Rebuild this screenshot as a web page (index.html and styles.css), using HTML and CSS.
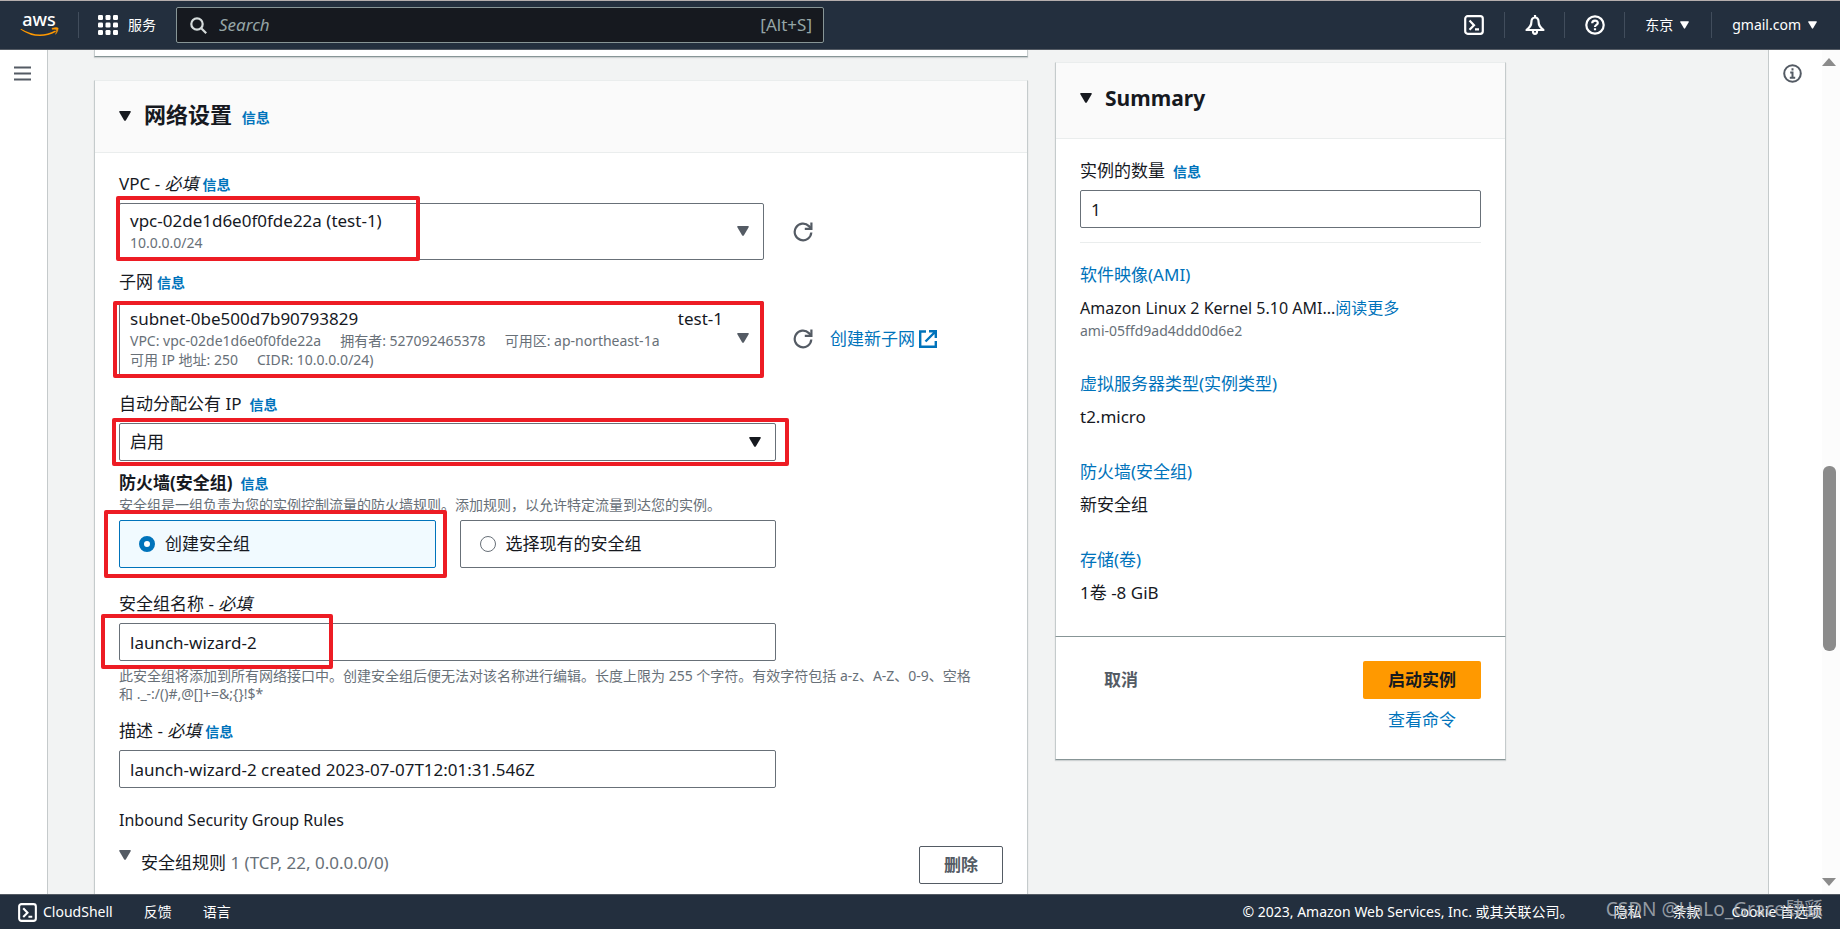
FILE: index.html
```html
<!DOCTYPE html>
<html lang="zh-CN">
<head>
<meta charset="utf-8">
<title>启动实例 | EC2</title>
<link rel="stylesheet" href="styles.css">
</head>
<body>
<svg class="defs" width="0" height="0" aria-hidden="true">
  <symbol id="caret" viewBox="0 0 12 10"><path d="M1 0h10q1 0 .8.9L6.8 9.400q-.8.9-1.600 0L.2.9Q0 0 1 0z" fill="currentColor"/></symbol>
  <symbol id="refresh" viewBox="0 0 20 20"><path d="M18.300 10.500a8.300 8.300 0 1 1-2.400-6.400l2 2" fill="none" stroke="currentColor" stroke-width="2.200"/><path d="M18.400.5v6.400h-6.600" fill="none" stroke="currentColor" stroke-width="2.200"/></symbol>
  <symbol id="shell" viewBox="0 0 20 20"><rect x="1.200" y="1.200" width="17.600" height="17.600" rx="2.500" fill="none" stroke="currentColor" stroke-width="2.200"/><path d="M5.500 5.500l4.500 4.700-4.500 4.600M11 14.400h4" fill="none" stroke="currentColor" stroke-width="2.200"/></symbol>
</svg>

<header class="topbar">
  <a class="logo" href="#" aria-label="AWS">
    <svg width="39" height="32" viewBox="0 0 39 32">
      <text x="19" y="17" text-anchor="middle" class="logo-text">aws</text>
      <path d="M1 19.700q17.500 10.500 34.200 1.800l.8 1.300Q18 32.500 .5 20.400z" fill="#f90"/>
      <path d="M32 19.300q5-1.600 6.200-.2 0 3.600-2.600 6.200 1.300-3.200.9-4.800-1.500-.6-4.500-.2z" fill="#f90" stroke="#f90" stroke-width=".5"/>
    </svg>
  </a>
  <button class="services" type="button">
    <svg width="20" height="20" viewBox="0 0 20 20" fill="#fff"><rect width="5" height="5" rx="1.200"/><rect x="7.500" width="5" height="5" rx="1.200"/><rect x="15" width="5" height="5" rx="1.200"/><rect y="7.500" width="5" height="5" rx="1.200"/><rect x="7.500" y="7.500" width="5" height="5" rx="1.200"/><rect x="15" y="7.500" width="5" height="5" rx="1.200"/><rect y="15" width="5" height="5" rx="1.200"/><rect x="7.500" y="15" width="5" height="5" rx="1.200"/><rect x="15" y="15" width="5" height="5" rx="1.200"/></svg>
    <span>服务</span>
  </button>
  <label class="search">
    <svg width="17" height="17" viewBox="0 0 17 17" fill="none" stroke="#d5dbdb" stroke-width="2.200"><circle cx="7" cy="7" r="5.700"/><path d="M11 11l5.200 5.200"/></svg>
    <input type="search" placeholder="Search" aria-label="Search">
    <span>[Alt+S]</span>
  </label>
  <nav class="tools" aria-label="工具">
    <button type="button" aria-label="CloudShell"><svg width="20" height="20"><use href="#shell"/></svg></button>
    <button type="button" aria-label="通知"><svg width="20" height="20" viewBox="0 0 20 20" fill="none" stroke="#fff" stroke-width="2.200" stroke-linejoin="round"><path d="M10 2.500c-2.600 0-3.600 2-3.600 4.500 0 4-1.900 5.500-4.900 8h17c-3-2.500-4.900-4-4.900-8 0-2.500-1-4.500-3.600-4.500zM10 0v2.500M8 15.500v1.300a2 2 0 0 0 4 0v-1.300"/></svg></button>
    <button type="button" aria-label="帮助"><svg width="20" height="20" viewBox="0 0 20 20" fill="none" stroke="#fff" stroke-width="2.200"><circle cx="10" cy="10" r="8.700"/><path d="M7.200 8.300c0-3.600 5.600-3.600 5.600-.4 0 2-2.800 1.900-2.800 4M10 13.300v2"/></svg></button>
    <button class="menu" type="button">东京<svg width="9" height="8"><use href="#caret"/></svg></button>
    <button class="menu" type="button">gmail.com<svg width="9" height="8"><use href="#caret"/></svg></button>
  </nav>
</header>

<div class="workspace">
  <aside class="rail rail-left">
    <button type="button" aria-label="打开导航"><svg width="17" height="15" viewBox="0 0 17 15" stroke="#545b64" stroke-width="2"><path d="M0 1.500h17M0 7.500h17M0 13.500h17"/></svg></button>
  </aside>

  <main class="content">
    <div class="columns">
      <div class="left-column">
        <div class="card previous-card"></div>
        <section class="card">
          <header class="card-head network-head">
            <svg class="caret" width="12" height="10"><use href="#caret"/></svg>
            <h2>网络设置 <a class="info" href="#">信息</a></h2>
          </header>
          <div class="card-body form">
            <div class="field">
              <div class="label"><label for="vpc">VPC - <i>必填</i></label><a class="info" href="#">信息</a></div>
              <div class="control-row">
                <div class="marked picker-wrap">
                  <button id="vpc" class="picker" type="button" aria-haspopup="listbox">
                    <span class="picker-text">
                      <span class="main-line">vpc-02de1d6e0f0fde22a (test-1)</span>
                      <span class="sub-line">10.0.0.0/24</span>
                    </span>
                    <svg class="caret" width="12" height="10"><use href="#caret"/></svg>
                  </button>
                  <span class="mark mark-vpc"></span>
                </div>
                <button class="refresh" type="button" aria-label="刷新"><svg width="20" height="20"><use href="#refresh"/></svg></button>
              </div>
            </div>

            <div class="field subnet-field">
              <div class="label"><label for="subnet">子网</label><a class="info" href="#">信息</a></div>
              <div class="control-row">
                <div class="marked picker-wrap">
                  <button id="subnet" class="picker" type="button" aria-haspopup="listbox">
                    <span class="picker-text">
                      <span class="main-line"><span>subnet-0be500d7b90793829</span><span>test-1</span></span>
                      <span class="sub-line"><span>VPC: vpc-02de1d6e0f0fde22a</span><span>拥有者: 527092465378</span><span>可用区: ap-northeast-1a</span></span>
                      <span class="sub-line"><span>可用 IP 地址: 250</span><span>CIDR: 10.0.0.0/24)</span></span>
                    </span>
                    <svg class="caret" width="12" height="10"><use href="#caret"/></svg>
                  </button>
                  <span class="mark mark-subnet"></span>
                </div>
                <button class="refresh" type="button" aria-label="刷新"><svg width="20" height="20"><use href="#refresh"/></svg></button>
                <a class="create-link" href="#">创建新子网<svg width="18" height="18" viewBox="0 0 18 18" fill="none" stroke="currentColor" stroke-width="2.400"><path d="M7 1.500H1.200v15.300h15.600V11M10 1.200h6.800V8M16.500 1.500L6.500 11.500"/></svg></a>
              </div>
            </div>

            <div class="field">
              <div class="label wide"><label for="public-ip">自动分配公有 IP</label><a class="info" href="#">信息</a></div>
              <div class="marked narrow">
                <select id="public-ip" class="box"><option>启用</option></select>
                <svg class="caret select-caret" width="12" height="10"><use href="#caret"/></svg>
                <span class="mark mark-ip"></span>
              </div>
            </div>

            <fieldset class="field firewall-field">
              <legend class="label wide"><b>防火墙(安全组)</b><a class="info" href="#">信息</a></legend>
              <p class="hint">安全组是一组负责为您的实例控制流量的防火墙规则。添加规则，以允许特定流量到达您的实例。</p>
              <div class="tiles narrow">
                <div class="marked">
                  <label class="tile tile-on"><input type="radio" name="group" checked>创建安全组</label>
                  <span class="mark mark-tile"></span>
                </div>
                <label class="tile"><input type="radio" name="group">选择现有的安全组</label>
              </div>
            </fieldset>

            <div class="field name-field">
              <div class="label"><label for="name">安全组名称 - <i>必填</i></label></div>
              <div class="marked narrow">
                <input id="name" class="box" type="text" value="launch-wizard-2">
                <span class="mark mark-name"></span>
              </div>
              <p class="hint">此安全组将添加到所有网络接口中。创建安全组后便无法对该名称进行编辑。长度上限为 255 个字符。有效字符包括 a-z、A-Z、0-9、空格和 ._-:/()#,@[]+=&amp;;{}!$*</p>
            </div>

            <div class="field description-field">
              <div class="label"><label for="description">描述 - <i>必填</i></label><a class="info" href="#">信息</a></div>
              <div class="narrow"><input id="description" class="box" type="text" value="launch-wizard-2 created 2023-07-07T12:01:31.546Z"></div>
            </div>

            <h3 class="rules-title">Inbound Security Group Rules</h3>
            <div class="rule">
              <svg class="caret" width="12" height="10"><use href="#caret"/></svg>
              <p>安全组规则 <span>1 (TCP, 22, 0.0.0.0/0)</span></p>
              <button class="button" type="button">删除</button>
            </div>
          </div>
        </section>
      </div>

      <aside class="summary">
        <section class="card">
          <header class="card-head summary-head">
            <svg class="caret" width="12" height="10"><use href="#caret"/></svg>
            <h2>Summary</h2>
          </header>
          <div class="card-body">
            <div class="label wide"><label for="count">实例的数量</label><a class="info" href="#">信息</a></div>
            <input id="count" class="box" type="text" inputmode="numeric" value="1">
            <dl>
              <div><dt><a href="#">软件映像(AMI)</a></dt><dd class="ami">Amazon Linux 2 Kernel 5.10 AMI...<a href="#">阅读更多</a></dd><dd class="hint">ami-05ffd9ad4ddd0d6e2</dd></div>
              <div><dt><a href="#">虚拟服务器类型(实例类型)</a></dt><dd>t2.micro</dd></div>
              <div><dt><a href="#">防火墙(安全组)</a></dt><dd>新安全组</dd></div>
              <div><dt><a href="#">存储(卷)</a></dt><dd>1卷 -8 GiB</dd></div>
            </dl>
          </div>
        </section>
        <div class="card actions">
          <button class="plain" type="button">取消</button>
          <div class="launch">
            <button class="primary" type="button">启动实例</button>
            <a href="#">查看命令</a>
          </div>
        </div>
      </aside>
    </div>
  </main>

  <aside class="rail rail-right">
    <button type="button" aria-label="信息"><svg width="19" height="19" viewBox="0 0 19 19" fill="none" stroke="#545b64" stroke-width="2"><circle cx="9.500" cy="9.500" r="8.300"/><path d="M9.500 4.300v2.200M7.200 8.500h2.300v5M6.800 13.700h5.400"/></svg></button>
  </aside>
  <div class="scrollbar" aria-hidden="true">
    <svg width="14" height="8"><path d="M0 8L7 0l7 8z" fill="#8b8b8b"/></svg>
    <span class="track"><span class="thumb"></span></span>
    <svg width="14" height="8"><path d="M0 0l7 8 7-8z" fill="#8b8b8b"/></svg>
  </div>
</div>

<footer class="bottombar">
  <a class="shell" href="#"><svg width="19" height="19"><use href="#shell"/></svg>CloudShell</a>
  <a href="#">反馈</a>
  <a href="#">语言</a>
  <span class="copyright">© 2023, Amazon Web Services, Inc. 或其关联公司。</span>
  <a href="#">隐私</a>
  <a href="#">条款</a>
  <a href="#">Cookie 首选项</a>
  <span class="watermark">CSDN @HaLo_Grace肆繇</span>
</footer>
</body>
</html>
```
FILE: styles.css
```css
* { box-sizing: border-box; }
body {
  margin: 0;
  height: 100vh;
  display: flex;
  flex-direction: column;
  overflow: hidden;
  background: #f2f3f3;
  color: #16191f;
  font: 17px/22px "Noto Sans", "Noto Sans CJK SC", sans-serif;
}
h2, h3, p, dl, dd { margin: 0; }
a { color: #0073bb; text-decoration: none; }
button, input, select { font: inherit; color: inherit; }
button { border: 0; padding: 0; background: none; }
svg { flex: none; display: block; }
.defs { position: absolute; }

.topbar {
  flex: none;
  height: 50px;
  display: flex;
  align-items: center;
  background: #232f3e;
  border-top: 1px solid #b5aead;
  border-bottom: 1px solid #545b64;
  color: #fff;
  font-size: 14px;
}
.logo { padding: 0 19px 0 20px; height: 26px; display: flex; align-items: center; border-right: 1px solid #414d5c; }
.logo-text { font: 500 18px "Noto Sans", sans-serif; fill: #fff; }
.services { display: flex; align-items: center; gap: 10px; margin: 0 20px 0 19px; }
.search {
  flex: 0 1 648px;
  height: 36px;
  display: flex;
  align-items: center;
  gap: 12px;
  padding: 0 11px 0 13px;
  background: #16191f;
  border: 1px solid #879596;
  border-radius: 2px;
  color: #95a5a6;
  font-size: 17px;
}
.search input { flex: 1; min-width: 0; border: 0; padding: 0; background: none; outline: 0; }
.search input::placeholder { color: #95a5a6; font-style: italic; }
.tools { margin-left: auto; display: flex; align-items: center; }
.tools button {
  height: 26px;
  width: 60px;
  display: flex;
  align-items: center;
  justify-content: center;
  gap: 7px;
  border-left: 1px solid #414d5c;
}
.tools button:first-child { border-left: 0; }
.tools .menu { width: auto; padding: 0 22px 0 20px; }
.tools .menu:last-child { padding-right: 23px; }

.workspace { flex: 1; min-height: 0; display: flex; }
.rail { flex: none; background: #fff; padding-top: 14px; display: flex; justify-content: center; align-items: flex-start; }
.rail button { height: 19px; display: flex; align-items: center; }
.rail-left { width: 48px; border-right: 1px solid #c5cacb; padding-right: 2px; }
.rail-right { width: 54px; border-left: 1px solid #c5cacb; padding-right: 6px; }
.scrollbar { width: 18px; flex: none; padding: 8px 4px 8px 0; display: flex; flex-direction: column; align-items: center; background: #fcfcfc; }
.track { flex: 1; width: 13px; }
.thumb { display: block; width: 13px; height: 185px; margin-top: 400px; border-radius: 6px; background: #8b8b8b; }

.content { flex: 1; min-width: 0; overflow: hidden; padding: 0 46px; }
.columns { display: grid; grid-template-columns: minmax(0, 1fr) 451px; gap: 27px; max-width: 1412px; align-items: start; }
.card {
  background: #fff;
  border: 1px solid #c5cbcc;
  border-top-color: #eaeded;
  border-bottom-color: #879596;
  box-shadow: 0 1px 1px rgba(0, 28, 36, .15);
}
.previous-card { height: 7px; border-top: 0; margin-bottom: 23px; }
.card-head { display: flex; align-items: center; background: #fafafa; border-bottom: 1px solid #eaeded; padding: 0 24px; }
.network-head { height: 72px; padding-bottom: 2px; }
.network-head h2 { margin-left: 13px; font-size: 22px; }
.network-head .info { margin-left: 4px; }
.summary-head { height: 76px; padding-bottom: 5px; }
.summary-head h2 { margin-left: 13px; font-size: 21px; }
.card-body { padding: 20px 24px 32px; }
.info { font-size: 14px; font-weight: 700; }

.field { margin: 0 0 11px; padding: 0; border: 0; min-width: 0; }
.subnet-field { margin-bottom: 16px; }
.firewall-field { margin-bottom: 25px; }
.name-field { margin-bottom: 17px; }
.description-field { margin-bottom: 21px; }
.label { margin-bottom: 8px; padding: 0; height: 22px; white-space: nowrap; }
.label .info { margin-left: 4px; }
.wide .info { margin-left: 8px; }
.firewall-field .label { margin-bottom: 2px; }
.control-row { display: flex; align-items: center; }
.narrow { max-width: 657px; }
.picker-wrap { flex: 0 1 645px; }
.picker {
  width: 100%;
  display: flex;
  align-items: center;
  padding: 5px 14px 7px 10px;
  background: #fff;
  border: 1px solid #687078;
  border-radius: 2px;
  text-align: left;
  color: #545b64;
}
.picker-text { flex: 1; padding-right: 14px; }
.main-line { display: flex; justify-content: space-between; font-size: 17px; line-height: 24px; color: #16191f; }
.sub-line { display: flex; gap: 19px; font-size: 14px; line-height: 19px; color: #687078; }
.refresh { margin-left: 29px; color: #545b64; }
.create-link { display: flex; align-items: center; gap: 4px; margin-left: 17px; }
.box {
  display: block;
  width: 100%;
  height: 38px;
  padding: 0 10px;
  background: #fff;
  border: 1px solid #687078;
  border-radius: 2px;
  appearance: none;
}
.select-caret { position: absolute; right: 15px; top: 14px; pointer-events: none; }
.hint { font-size: 14px; line-height: 18px; color: #687078; }
.firewall-field .hint { margin-bottom: 6px; }
.name-field .hint { margin-top: 6px; padding-right: 24px; }
.tiles { display: grid; grid-template-columns: 1fr 1fr; gap: 24px; }
.tile {
  height: 48px;
  display: flex;
  align-items: center;
  gap: 10px;
  padding: 0 19px;
  border: 1px solid #687078;
  border-radius: 2px;
}
.tile-on { background: #f1faff; border-color: #0073bb; }
.tile input { appearance: none; width: 16px; height: 16px; margin: 0; border: 1px solid #687078; border-radius: 50%; background: #fff; }
.tile input:checked { border: 5px solid #0073bb; }

/* Red callouts drawn over the fields */
.marked { position: relative; }
.mark { position: absolute; border: 4px solid #ed1c24; border-radius: 2px; pointer-events: none; }
.mark-vpc { left: -3px; top: -7px; width: 304px; height: 65px; }
.mark-subnet { left: -6px; right: 0; top: 0; bottom: -1px; }
.mark-ip { left: -7px; right: -13px; top: -5px; bottom: -5px; }
.mark-tile { left: -15px; right: -11px; top: -10px; bottom: -10px; }
.mark-name { left: -18px; top: -9px; width: 232px; height: 55px; }

.rules-title { font-size: 16px; font-weight: 400; margin-bottom: 15px; }
.rule { display: flex; align-items: flex-start; }
.rule .caret { color: #545b64; margin-top: 4px; }
.rule p { flex: 1; padding: 6px 0 0 10px; }
.rule p span { color: #687078; }
.button { height: 38px; padding: 0 24px; border: 1px solid #545b64; border-radius: 2px; color: #545b64; font-weight: 700; }

.summary { margin-top: 12px; }
.summary .card-body > .label { margin-top: 1px; }
dl { margin-top: 14px; padding-top: 21px; border-top: 1px solid #eaeded; display: grid; gap: 33px; }
dt { margin-bottom: 11px; }
.ami { font-size: 16px; }
dd.hint { margin-top: 3px; }
.actions { display: flex; justify-content: space-between; align-items: flex-start; padding: 24px 24px 28px; border-top: 0; }
.plain { height: 38px; padding: 0 24px; color: #545b64; font-weight: 700; }
.launch { display: flex; flex-direction: column; align-items: center; gap: 10px; }
.primary { height: 38px; padding: 0 25px; border-radius: 2px; background: #f90; font-weight: 700; }

.bottombar {
  position: relative;
  flex: none;
  height: 35px;
  display: flex;
  align-items: center;
  gap: 31px;
  padding: 0 18px;
  background: #232f3e;
  border-top: 1px solid #545b64;
  color: #fff;
  font-size: 14px;
}
.bottombar a { color: #fff; }
.bottombar .shell { display: flex; align-items: center; gap: 6px; }
.copyright { margin-left: auto; margin-right: 9px; }
.watermark { position: absolute; right: 17px; top: 3px; font-size: 19px; color: #b9bec4; opacity: .75; }
```
